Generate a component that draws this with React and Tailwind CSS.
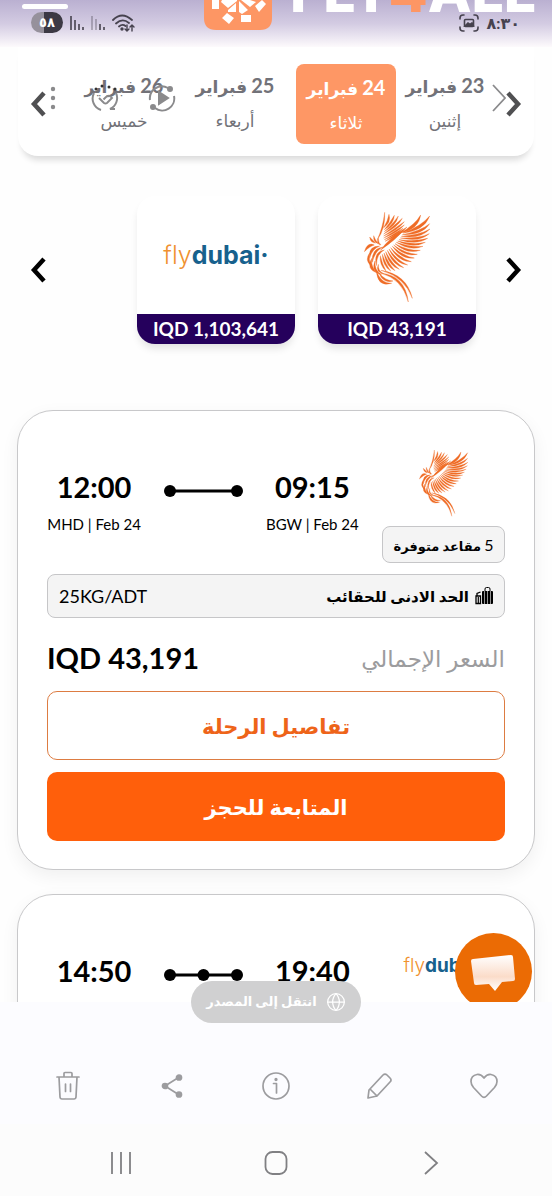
import { Globe } from 'lucide-react'

const dates = [
  { id: 23, month: 'فبراير', day: 'إثنين' },
  { id: 24, month: 'فبراير', day: 'ثلاثاء', active: true },
  { id: 25, month: 'فبراير', day: 'أربعاء' },
  { id: 26, month: 'فبراير', day: 'خميس' },
]

const airlines = [
  { id: 'phoenix', price: 'IQD 43,191' },
  { id: 'flydubai', price: 'IQD 1,103,641' },
]

const flights = [
  { id: 1, airline: 'phoenix', from: 'BGW', to: 'MHD', depart: '09:15', arrive: '12:00', stops: 0, price: 'IQD 43,191' },
  { id: 2, airline: 'flydubai', from: 'BGW', to: 'MHD', depart: '19:40', arrive: '14:50', stops: 1, price: 'IQD 1,103,641' },
]

// each feather: base x/y, bend x/y, tip x/y, width
const feathers = [
  // back wing
  [60, 114, 82, 78, 83, 30, 9], [80, 76, 98, 58, 96, 36, 12], [82, 82, 106, 62, 112, 39, 12],
  [82, 88, 114, 66, 124, 41, 11], [80, 95, 120, 70, 136, 48, 11], [80, 101, 120, 79, 142, 58, 10],
  [80, 107, 118, 88, 142, 68, 10], [82, 112, 116, 96, 138, 78, 9], [84, 117, 112, 103, 128, 87, 8],
  // front wing
  [70, 144, 108, 108, 150, 74, 18], [130, 92, 180, 74, 191, 38, 18], [138, 92, 198, 78, 218, 41, 17],
  [136, 97, 194, 92, 218, 64, 14], [133, 102, 190, 104, 219, 80, 13], [130, 107, 188, 114, 217, 94, 12],
  [126, 112, 178, 124, 212, 108, 12], [122, 116, 170, 134, 205, 120, 12], [118, 120, 162, 142, 198, 132, 12],
  [114, 124, 152, 151, 190, 144, 12], [110, 128, 144, 160, 181, 156, 12], [106, 132, 136, 167, 172, 167, 12],
  [101, 136, 128, 174, 163, 178, 12], [96, 140, 119, 180, 152, 188, 12], [91, 144, 110, 184, 140, 196, 12],
  [86, 148, 101, 188, 127, 201, 12], [81, 152, 92, 190, 114, 205, 12], [76, 156, 82, 190, 101, 206, 11],
  [70, 160, 71, 186, 87, 206, 10],
  // head and body
  [52, 128, 36, 124, 22, 148, 16], [56, 122, 44, 118, 38, 104, 11], [64, 124, 52, 118, 50, 100, 9],
  [72, 128, 60, 124, 64, 108, 8], [68, 131, 38, 136, 38, 168, 16], [78, 134, 48, 142, 46, 180, 14],
  [82, 143, 54, 150, 58, 190, 12], [38, 152, 28, 172, 42, 190, 12], [44, 168, 34, 198, 60, 212, 16],
  [54, 176, 46, 206, 74, 218, 12], [64, 186, 58, 208, 80, 214, 9],
  // tail
  [58, 204, 66, 250, 104, 243, 16], [66, 212, 82, 240, 108, 236, 12], [70, 212, 140, 224, 154, 299, 13],
  [72, 204, 146, 220, 166, 288, 11],
]

function featherPath([x0, y0, cx, cy, x1, y1, w]) {
  const len = Math.hypot(x1 - x0, y1 - y0) || 1
  const nx = (-(y1 - y0) / len) * (w / 2)
  const ny = ((x1 - x0) / len) * (w / 2)
  return `M${x0} ${y0}Q${cx + nx} ${cy + ny} ${x1} ${y1}Q${cx - nx} ${cy - ny} ${x0} ${y0}Z`
}

function Phoenix({ className }) {
  return (
    <svg viewBox="18 26 204 276" className={className} aria-label="Phoenix airline" role="img">
      {feathers.map((f, i) => (
        <path key={i} d={featherPath(f)} fill="#ef6c26" stroke="#ef6c26" strokeWidth="1" />
      ))}
    </svg>
  )
}

function FlyDubai({ className }) {
  return (
    <div dir="ltr" className={`flex font-[Inter,sans-serif] leading-none ${className}`}>
      <span className="font-light text-[#f0912f]">fly</span>
      <span className="font-bold text-[#17618d]">dubai</span>
      <span className="font-bold text-[#17618d]">·</span>
    </div>
  )
}

function Arrow({ left, label }) {
  return (
    <button aria-label={label} className="flex w-4 shrink-0 justify-center">
      <svg viewBox="0 0 16 26" className="h-[26px] w-4" fill="none" stroke="currentColor" strokeWidth="4.5">
        <path d={left ? 'M14 2 4 13l10 11' : 'M2 2l10 11L2 24'} />
      </svg>
    </button>
  )
}

function StatusBar() {
  return (
    <div dir="ltr" className="absolute inset-x-0 top-3 flex h-[21px] items-center justify-between pl-[31px] pr-8 text-[#46424e]">
      <div className="flex items-center gap-[7px]">
        <div className="flex h-[21px] w-8 items-center justify-center rounded-full bg-linear-to-r from-[#96919c] from-42% to-[#3c3944] to-42% text-[13px] font-bold text-white">
          <span>٥٨</span>
        </div>
        <svg viewBox="0 0 14 16" className="h-4 w-[14px]" stroke="currentColor" strokeWidth="1.6">
          <path d="M1 1v14M5 5v10M9 9v6M13 12v3" />
        </svg>
        <svg viewBox="0 0 14 16" className="h-4 w-[14px]" stroke="currentColor" strokeWidth="1.6">
          <path d="M1 1v14M5 4v11" opacity=".4" />
          <path d="M9 9v6M13 12v3" />
        </svg>
        <svg viewBox="0 0 24 18" className="h-[18px] w-6" fill="none" stroke="currentColor" strokeWidth="1.8" strokeLinecap="round">
          <path d="M1 6Q10-3 20 6M4 9.500Q10.500 3.500 17 9M7 12.500q3.500-3 6.500-.5" />
          <circle cx="10" cy="15" r=".8" fill="currentColor" />
          <path d="M15 11v6m-2-2 2 2 2-2M20 17v-6m-2 2 2-2 2 2" strokeWidth="1.400" />
        </svg>
      </div>
      <div className="flex items-center gap-2">
        <svg viewBox="0 0 20 18" className="h-[18px] w-5" fill="none" stroke="currentColor" strokeWidth="1.6" strokeLinecap="round">
          <path d="M1 5V4q0-3 3-3h1M15 1h1q3 0 3 3v1M19 13v1q0 3-3 3h-1M5 17H4q-3 0-3-3v-1" />
          <rect x="5.500" y="5.500" width="9" height="7" rx="1" />
          <path d="m6 12 3-3 2 1.500 2-1.500 1.500 3z" fill="currentColor" />
        </svg>
        <span className="text-[16px] font-bold">٨:٣٠</span>
      </div>
    </div>
  )
}

function Header() {
  return (
    <header className="relative h-[47px] shrink-0 bg-linear-to-b from-[#bab0d1] via-[#d3cbe2] via-50% to-[#fdfafc]">
      <div dir="ltr" className="flex h-full justify-between overflow-hidden pl-[22px] pr-4">
        <button aria-label="القائمة" className="mt-1 h-[5px] w-[46px] rounded-full bg-white" />
        <div className="flex gap-[18px]">
          <svg viewBox="0 0 68 30" className="h-[30px] w-[68px] shrink-0" aria-hidden="true">
            <path d="M0 0h68v18q0 12-12 12H12Q0 30 0 18z" fill="#fd9664" />
            <path
              d="M8 0h7v9H8zM18 0h6l9 0v1l-9 7-7-6zM24 10l8-7v9h-8zM35 1l9 9-6 4-3-2zM37 0h9l6 2-6 5zM51 6l7-6 4 4-7 8zM18 18l5-5 7 5-5 6zM37 15h10v7H37z"
              fill="#fff"
            />
          </svg>
          <div className="flex h-5 items-end overflow-hidden font-[Inter,sans-serif] text-[57px] leading-none font-extrabold text-white">
            <span>FLY<span className="text-[#fd9664]">4</span>ALL</span>
          </div>
        </div>
      </div>
      <StatusBar />
    </header>
  )
}

// translucent viewer controls that float over the date strip
function ViewerIcons() {
  return (
    <div dir="ltr" className="pointer-events-none absolute inset-x-0 top-9 flex h-[30px] items-center justify-between pl-8 pr-7 text-[#8a8a8c]">
      <div className="flex items-center">
        <svg viewBox="0 0 6 24" className="h-6 w-[6px]" fill="currentColor">
          <circle cx="3" cy="3" r="2.200" /><circle cx="3" cy="12" r="2.200" /><circle cx="3" cy="21" r="2.200" />
        </svg>
        <svg viewBox="0 0 28 28" className="ml-[35px] h-7 w-7" fill="none" stroke="currentColor" strokeWidth="2">
          <path d="M10 26A12 12 0 0 1 3 9M25 9a12 12 0 0 1-6 16h5" />
          <path d="m8 14 5 5q1.500 1 3 0l5-5q-3-4-6.500-.5l-2 2" />
          <g fill="#333" stroke="none">
            <circle cx="5" cy="5" r="1.500" /><circle cx="11" cy="2" r="1.500" /><circle cx="18" cy="3" r="1.500" /><circle cx="24" cy="5" r="1.500" />
          </g>
        </svg>
        <svg viewBox="0 0 28 28" className="ml-[29px] h-7 w-7" fill="none" stroke="currentColor" strokeWidth="2">
          <path d="M2 16A12 12 0 0 1 20 4M26 12A12 12 0 0 1 7 24" />
          <path d="m11 8 9 6-9 6z" fill="currentColor" />
          <circle cx="22" cy="5" r="2" fill="currentColor" /><circle cx="5" cy="23" r="2" fill="currentColor" />
        </svg>
      </div>
      <svg viewBox="0 0 14 28" className="h-7 w-[14px]" fill="none" stroke="currentColor" strokeWidth="1.800">
        <path d="m1 1 12 13L1 27" />
      </svg>
    </div>
  )
}

function DateStrip() {
  return (
    <nav className="relative mx-[18px] flex h-[109px] shrink-0 items-start rounded-b-[20px] bg-white px-3 pt-[17px] shadow-[0_8px_6px_-4px_rgba(0,0,0,0.14)]">
      <div className="flex h-20 items-center text-[#505052]"><Arrow label="التالي" /></div>
      <div className="mr-3 ml-[28px] grid flex-1 grid-cols-[98fr_100fr_122fr_100fr]">
        {dates.map(d => (
          <button
            key={d.id}
            className={d.active
              ? 'flex h-20 flex-col items-center justify-center gap-2 rounded-lg bg-[#fe9765] text-white'
              : 'flex h-[76px] flex-col items-center justify-center gap-2 text-[#727278]'}
          >
            <span className="text-[17px] leading-7 font-bold whitespace-nowrap"><span className="text-[20px]">{d.id}</span> {d.month}</span>
            <span className="text-[17px] leading-6">{d.day}</span>
          </button>
        ))}
      </div>
      <div className="flex h-20 items-center text-[#505052]"><Arrow left label="السابق" /></div>
      <ViewerIcons />
    </nav>
  )
}

function AirlineRow() {
  return (
    <section className="mx-[18px] mt-10 flex shrink-0 items-center px-3 text-black">
      <Arrow label="التالي" />
      <div className="mr-[30px] flex flex-1 gap-[23px]">
        {airlines.map(a => (
          <button key={a.id} className="flex h-[148px] w-[158px] flex-col overflow-hidden rounded-[18px] bg-white shadow-[0_6px_8px_-2px_rgba(0,0,0,0.12)]">
            <span className="flex w-full flex-1 items-center justify-center">
              {a.id === 'phoenix' ? <Phoenix className="mt-1 h-[92px] w-[68px]" /> : <FlyDubai className="text-[25px]" />}
            </span>
            <span dir="ltr" className="h-[30px] w-full bg-[#25005c] text-[19px] leading-[30px] font-bold text-white">{a.price}</span>
          </button>
        ))}
      </div>
      <Arrow left label="السابق" />
    </section>
  )
}

function Point({ time, code }) {
  return (
    <div dir="ltr" className="flex w-[94px] flex-col items-center pt-[29px] text-black">
      <span className="text-[29px] leading-9 font-bold">{time}</span>
      <span className="mt-[9px] text-[15px] leading-5 whitespace-nowrap">{code} | Feb 24</span>
    </div>
  )
}

function Luggage() {
  return (
    <svg viewBox="0 0 18 18" className="h-[18px] w-[18px]" fill="currentColor" aria-hidden="true">
      <path d="M10 4V2q0-1.500 1.500-1.500h2Q15 .5 15 2v2" fill="none" stroke="currentColor" />
      <path d="M7 5q0-1 1-1h1v13H8q-1 0-1-1zM9.600 4h2.600v13H9.600zM12.800 4h2.600v13h-2.600zM16 4h1q1 0 1 1v11q0 1-1 1h-1z" />
      <path d="M1 9h4.500v7.500H1zM2 9V6.500L5.500 5" fill="none" stroke="currentColor" strokeWidth="1.300" />
      <path d="M2.700 10h1.200v6H2.700z" />
    </svg>
  )
}

function FlightCard({ flight }) {
  return (
    <article className="mx-[17px] shrink-0 rounded-[36px] border border-[#c8c8ca] bg-white px-[29px] pt-[29px] pb-7 shadow-[0_6px_18px_rgba(0,0,0,0.06)]">
      <div className="flex justify-between">
        <div className="flex w-[123px] flex-col">
          <div className="flex h-[86px] items-center justify-center">
            {flight.airline === 'phoenix' ? <Phoenix className="h-[68px] w-[51px]" /> : <FlyDubai className="pb-1 text-[19px]" />}
          </div>
          <div className="h-[37px] rounded-lg border border-[#c6c6c8] bg-[#f4f4f4] text-center text-[13px] leading-[35px] font-bold whitespace-nowrap text-black">
            <span className="text-[16px] font-normal">5</span> مقاعد متوفرة
          </div>
        </div>
        <Point time={flight.depart} code={flight.from} />
        <svg viewBox="0 0 79 12" className="mt-[45px] h-3 w-[79px]" aria-hidden="true">
          <path d="M6 6h67" stroke="#000" strokeWidth="3" />
          <circle cx="6" cy="6" r="6" />
          {flight.stops > 0 && <circle cx="39.500" cy="6" r="6" />}
          <circle cx="73" cy="6" r="6" />
        </svg>
        <Point time={flight.arrive} code={flight.to} />
      </div>

      <div className="mt-[11px] flex h-11 items-center justify-between rounded-lg border border-[#c6c6c8] bg-[#f4f4f4] px-[11px] text-black">
        <span className="flex items-center gap-[6px] text-[15px] font-bold"><Luggage />الحد الادنى للحقائب</span>
        <span dir="ltr" className="text-[18px]">25KG/ADT</span>
      </div>

      <div className="mt-5 mb-[13px] flex h-10 items-center justify-between">
        <span className="text-[23px] text-[#9c9c9e]">السعر الإجمالي</span>
        <span dir="ltr" className="text-[29px] font-bold text-black">{flight.price}</span>
      </div>

      <button className="h-[69px] w-full rounded-[10px] border border-[#dd7c42] bg-white text-[21px] font-bold text-[#ee6419]">تفاصيل الرحلة</button>
      <button className="mt-3 h-[69px] w-full rounded-[10px] bg-[#ff5f0b] text-[21px] font-bold text-white">المتابعة للحجز</button>
    </article>
  )
}

function ChatButton() {
  return (
    <button aria-label="محادثة" className="absolute right-5 -bottom-2 h-[77px] w-[77px] rounded-full bg-[#eb6b04]">
      <svg viewBox="0 0 77 77" className="h-full w-full">
        <defs>
          <linearGradient id="bubble" x1="0" y1="0" x2="0" y2="1">
            <stop offset="0" stopColor="#fff" />
            <stop offset=".6" stopColor="#fbdcc9" />
            <stop offset="1" stopColor="#fff" />
          </linearGradient>
        </defs>
        <path d="M18 26l38-4q2 0 2 2l2 22q0 2-2 2l-11 1-7 9-6-7-13 1q-2 0-2-2l-3-22q0-2 2-2z" fill="url(#bubble)" />
      </svg>
    </button>
  )
}

function ToolIcon({ label, children }) {
  return (
    <button aria-label={label} className="flex justify-center text-[#9c9c9f]">
      <svg viewBox="0 0 30 30" className="h-[30px] w-[30px]" fill="none" stroke="currentColor" strokeWidth="1.700" strokeLinejoin="round" strokeLinecap="round">
        {children}
      </svg>
    </button>
  )
}

function BottomBar() {
  return (
    <footer dir="ltr" className="relative flex h-[194px] shrink-0 flex-col bg-[#fcfcff]">
      <button dir="rtl" className="absolute -top-[21px] left-1/2 flex h-[42px] w-[170px] -translate-x-1/2 items-center justify-center gap-[9px] rounded-full bg-[#d0d0d1] text-[13px] font-bold whitespace-nowrap text-white">
        <Globe size={20} strokeWidth={1.5} />
        انتقل إلى المصدر
      </button>
      <div className="mt-[69px] grid grid-cols-5 px-4">
        <ToolIcon label="حذف">
          <path d="M4 6h22M11 6V2.500q0-1 1-1h6q1 0 1 1V6M6 6l1 20q.2 2 2 2h12q1.800 0 2-2l1-20M12.500 13v7.500M17.500 13v7.500" />
        </ToolIcon>
        <ToolIcon label="مشاركة">
          <path d="M21.500 6.500 8 15l13.500 8.500" />
          <g fill="currentColor"><circle cx="22" cy="6.500" r="2.500" /><circle cx="8" cy="15" r="2.500" /><circle cx="22" cy="23.500" r="2.500" /></g>
        </ToolIcon>
        <ToolIcon label="معلومات">
          <circle cx="15" cy="15" r="13" />
          <path d="M12.500 12.500h3V22" />
          <circle cx="15" cy="8.500" r=".8" fill="currentColor" />
        </ToolIcon>
        <ToolIcon label="تعديل">
          <path d="M4 19 18 4q2-2 4 0l3 3q2 2 0 4L12 25l-9 2zM5 18l7 7" />
        </ToolIcon>
        <ToolIcon label="المفضلة">
          <path d="M15 7q3-4 7-3.500 6 1 6 7 0 3-2.500 6l-8 8.500q-2.500 2.500-5 0l-8-8.500Q2 13.500 2 10.500q0-6 6-7 4-.5 7 3.500z" />
        </ToolIcon>
      </div>
      <div className="mt-[23px] flex-1 bg-[#fcfcfc] px-11">
        <div className="grid grid-cols-3 pt-[27px] text-[#808083]">
          <button aria-label="التطبيقات الأخيرة" className="flex justify-center">
            <svg viewBox="0 0 22 24" className="h-6 w-[22px]" stroke="currentColor" strokeWidth="1.800"><path d="M2 1v22M11 1v22M20 1v22" /></svg>
          </button>
          <button aria-label="الرئيسية" className="flex justify-center">
            <svg viewBox="0 0 24 24" className="h-6 w-6" fill="none" stroke="currentColor" strokeWidth="1.800"><rect x="1.500" y="1" width="21" height="22" rx="7" /></svg>
          </button>
          <button aria-label="رجوع" className="flex justify-center">
            <svg viewBox="0 0 16 24" className="h-6 w-4" fill="none" stroke="currentColor" strokeWidth="1.800"><path d="m2 1 12 11L2 23" /></svg>
          </button>
        </div>
      </div>
    </footer>
  )
}

export default function App() {
  return (
    <div dir="rtl" className="flex h-screen flex-col bg-[#fefefe] font-['Lato','DejaVu_Sans',sans-serif]">
      <main className="relative flex min-h-0 flex-1 flex-col overflow-hidden">
        <Header />
        <DateStrip />
        <AirlineRow />
        <div className="mt-[66px] flex flex-col gap-6">
          {flights.map(f => <FlightCard key={f.id} flight={f} />)}
        </div>
        <ChatButton />
      </main>
      <BottomBar />
    </div>
  )
}
